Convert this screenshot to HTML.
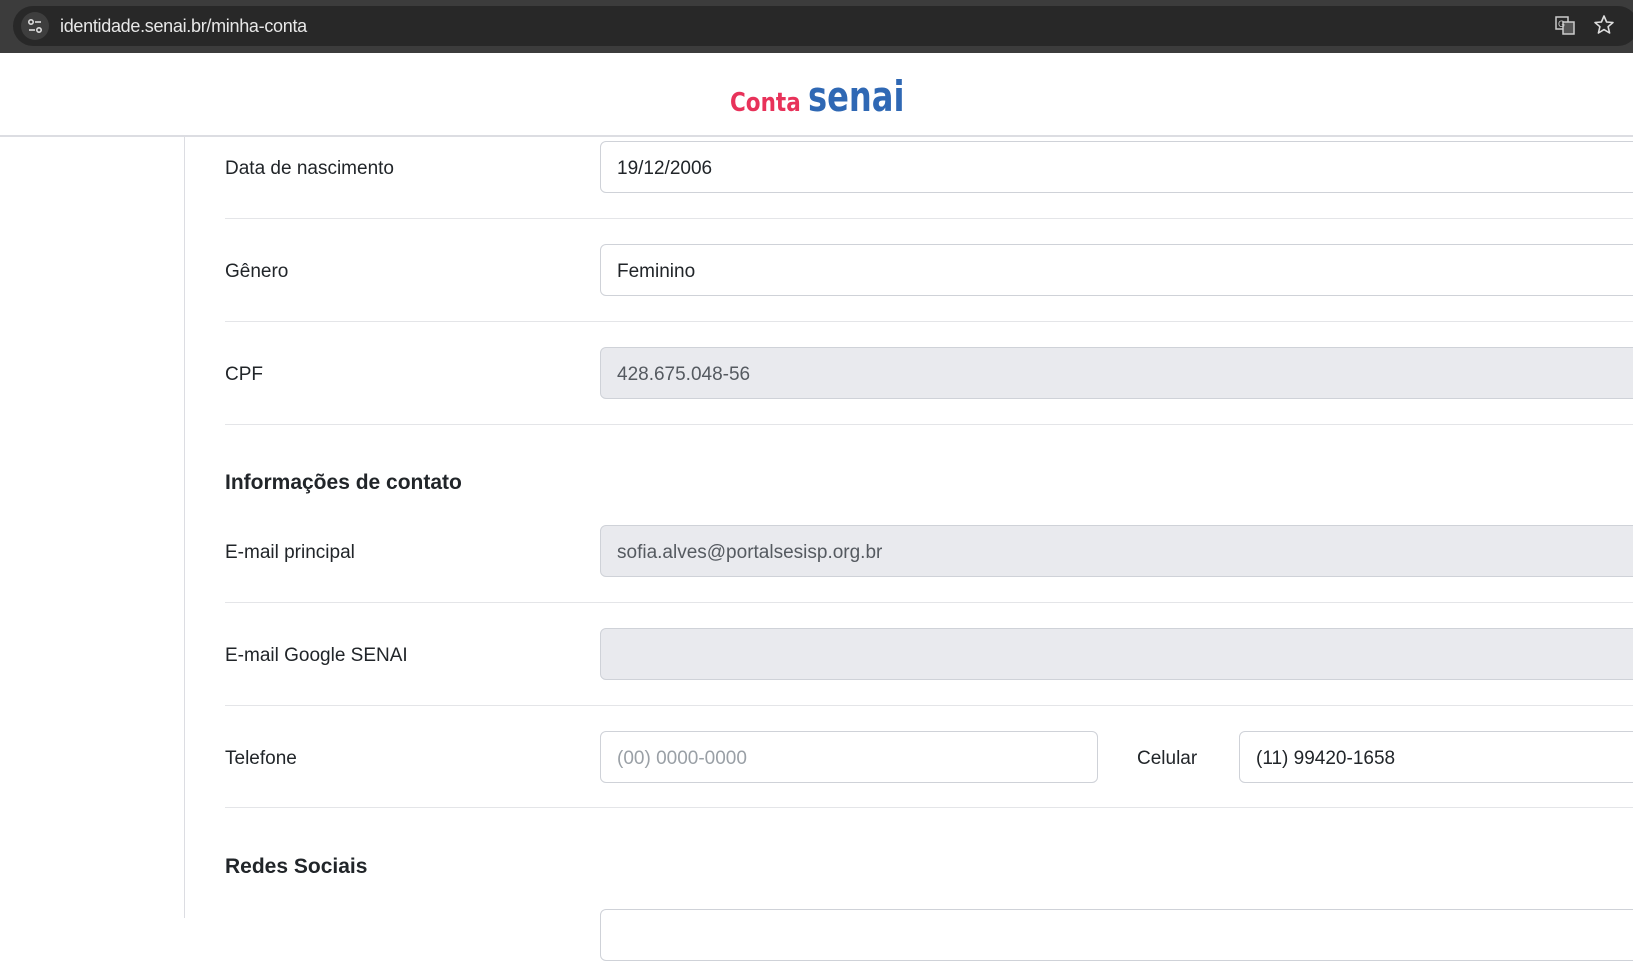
<!DOCTYPE html>
<html><head><meta charset="utf-8"><style>
*{box-sizing:border-box;margin:0;padding:0}
body{width:1633px;height:918px;overflow:hidden;background:#fff;font-family:"Liberation Sans",Arial,sans-serif;position:relative;color:#212529}
.bar{position:absolute;left:0;top:0;width:1633px;height:53px;background:#3c3c3c}
.addr{position:absolute;left:13px;top:6px;width:1625px;height:40px;background:#282828;border-radius:20px}
.addr .ic{position:absolute;left:8px;top:6px;width:28px;height:28px;border-radius:14px;background:#3e3e3e}
.url{position:absolute;left:47px;top:10px;color:#e8e8e8;font-size:18px;letter-spacing:-0.3px}
.hdr{position:absolute;left:0;top:53px;width:1633px;height:84px;border-bottom:2px solid #dcdde2}
.logo{position:absolute;left:730px;top:72px;white-space:nowrap;font-family:"DejaVu Sans Condensed","DejaVu Sans",sans-serif;font-weight:bold}
.logo .c{color:#e8325a;font-size:26px;display:inline-block;transform:scaleX(0.92);transform-origin:left}
.logo .s{color:#2f68b4;font-size:42px;display:inline-block;transform:scaleX(0.85);transform-origin:left;margin-left:-4px}
.side{position:absolute;left:184px;top:137px;width:1px;height:781px;background:#dcdde2}
.lbl{position:absolute;left:225px;font-size:19px;color:#212529;margin-top:3px}
.inp{position:absolute;left:600px;right:-10px;height:52px;border:1px solid #cfd2d8;border-radius:6px;font-size:19px;padding:16px 0 0 16px;color:#212529}
.dis{background:#e9eaee;color:#555a60}
.sep{position:absolute;left:225px;right:0;height:1px;background:#e4e5e8}
h3{position:absolute;left:225px;font-size:21px;font-weight:bold;color:#212529;margin-top:1px}
</style></head><body>
<div class="bar"><div class="addr"><div class="ic"><svg width="28" height="28" viewBox="0 0 28 28"><g stroke="#ddd" stroke-width="1.6" fill="none"><circle cx="10" cy="10" r="2.2"/><line x1="14" y1="10" x2="20" y2="10"/><circle cx="18" cy="18" r="2.2"/><line x1="8" y1="18" x2="14" y2="18"/></g></svg></div>
<div class="url">identidade.senai.br/minha-conta</div></div>
<svg style="position:absolute;left:1553px;top:13px" width="24" height="24" viewBox="0 0 24 24"><rect x="3" y="4" width="12" height="12" fill="none" stroke="#ccc" stroke-width="1.5"/><rect x="10" y="9" width="11" height="12" fill="#555" stroke="#ccc" stroke-width="1.5"/><text x="5" y="14" font-size="9" fill="#ccc" font-family="Liberation Sans">G</text></svg>
<svg style="position:absolute;left:1592px;top:13px" width="24" height="24" viewBox="0 0 24 24"><path d="M12 3l2.6 6 6.4.5-4.9 4.2 1.5 6.3L12 16.6 6.4 20l1.5-6.3L3 9.5 9.4 9z" fill="none" stroke="#ddd" stroke-width="1.6" stroke-linejoin="round"/></svg>
</div>
<div class="hdr"></div>
<div class="logo"><span class="c">Conta</span> <span class="s">senai</span></div>
<div class="side"></div>

<div class="lbl" style="top:155px">Data de nascimento</div>
<div class="inp" style="top:141px">19/12/2006</div>
<div class="sep" style="top:218px"></div>
<div class="lbl" style="top:258px">Gênero</div>
<div class="inp" style="top:244px">Feminino</div>
<div class="sep" style="top:321px"></div>
<div class="lbl" style="top:361px">CPF</div>
<div class="inp dis" style="top:347px">428.675.048-56</div>
<div class="sep" style="top:424px"></div>
<h3 style="top:470px">Informações de contato</h3>
<div class="lbl" style="top:539px">E-mail principal</div>
<div class="inp dis" style="top:525px">sofia.alves@portalsesisp.org.br</div>
<div class="sep" style="top:602px"></div>
<div class="lbl" style="top:642px">E-mail Google SENAI</div>
<div class="inp dis" style="top:628px"></div>
<div class="sep" style="top:705px"></div>
<div class="lbl" style="top:745px">Telefone</div>
<div class="inp" style="top:731px;right:auto;width:498px;color:#9aa0a6">(00) 0000-0000</div>
<div class="lbl" style="top:745px;left:1137px">Celular</div>
<div class="inp" style="top:731px;left:1239px">(11) 99420-1658</div>
<div class="sep" style="top:807px"></div>
<h3 style="top:854px">Redes Sociais</h3>
<div class="inp" style="top:909px"></div>
</body></html>
